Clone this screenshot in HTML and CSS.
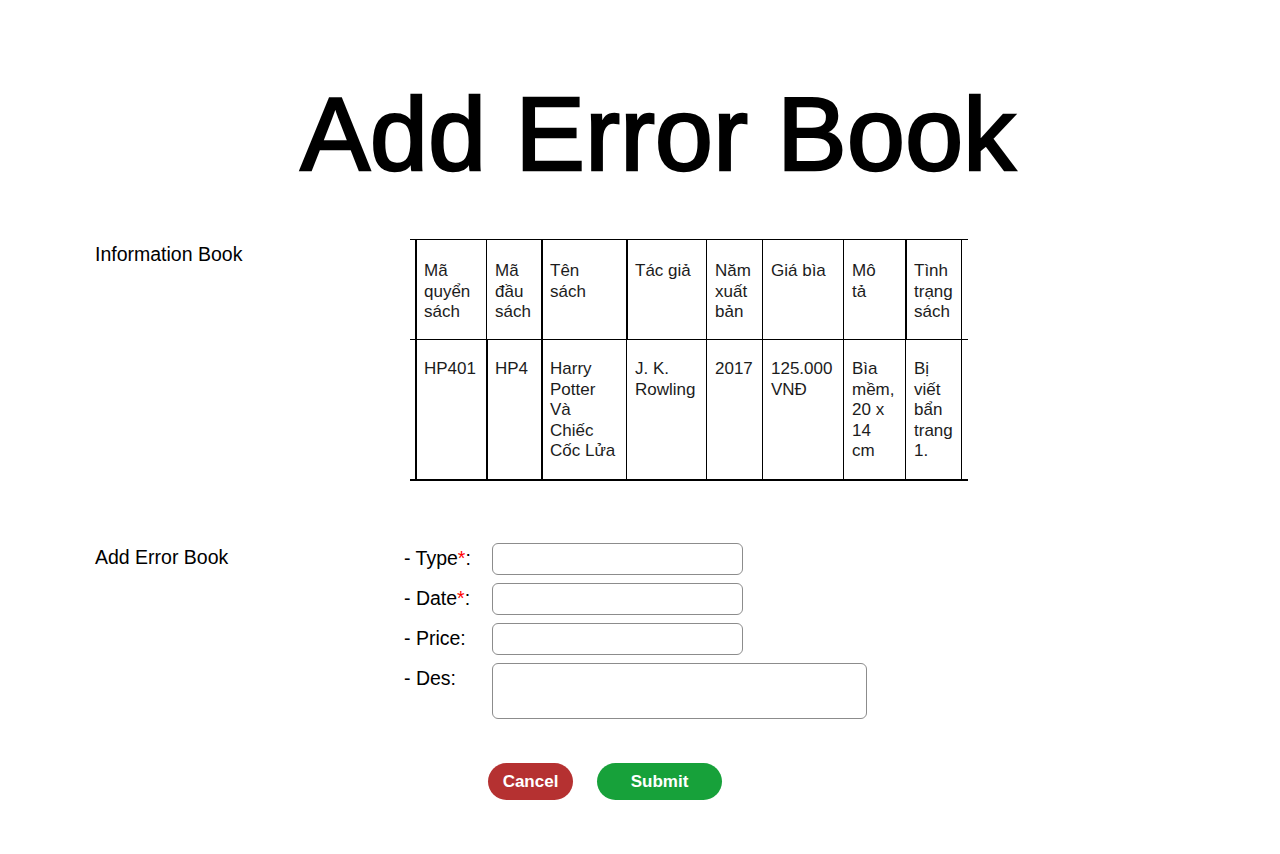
FILE: index.html
```html
<!DOCTYPE html>
<html lang="vi">
<head>
<meta charset="utf-8">
<title>Add Error Book</title>
<link rel="stylesheet" href="styles.css">
</head>
<body>
<main class="page">
  <h1 class="title">Add Error Book</h1>

  <section class="section info">
    <div class="section-label">Information Book</div>
    <div class="book-table">
      <div class="trow thead">
        <div class="cell spacer"></div>
        <div class="cell b2">Mã<br>quyển<br>sách</div>
        <div class="cell b1">Mã<br>đầu<br>sách</div>
        <div class="cell b2">Tên<br>sách</div>
        <div class="cell b2">Tác giả</div>
        <div class="cell b1">Năm<br>xuất<br>bản</div>
        <div class="cell b1">Giá bìa</div>
        <div class="cell b1">Mô<br>tả</div>
        <div class="cell b2">Tình<br>trạng<br>sách</div>
        <div class="cell b1 spacer"></div>
      </div>
      <div class="trow tbody">
        <div class="cell spacer"></div>
        <div class="cell b2">HP401</div>
        <div class="cell b2">HP4</div>
        <div class="cell b2">Harry<br>Potter<br>Và<br>Chiếc<br>Cốc Lửa</div>
        <div class="cell b1">J. K.<br>Rowling</div>
        <div class="cell b1">2017</div>
        <div class="cell b1">125.000<br>VNĐ</div>
        <div class="cell b1">Bìa<br>mềm,<br>20 x<br>14<br>cm</div>
        <div class="cell b1">Bị<br>viết<br>bẩn<br>trang<br>1.</div>
        <div class="cell b1 spacer"></div>
      </div>
    </div>
  </section>

  <section class="section add">
    <div class="section-label">Add Error Book</div>
    <div class="form-area">
      <form class="form">
        <label class="f-label" for="type">- Type<span class="req">*</span>:</label>
        <input class="f-input" id="type" type="text">
        <label class="f-label" for="date">- Date<span class="req">*</span>:</label>
        <input class="f-input" id="date" type="text">
        <label class="f-label" for="price">- Price:</label>
        <input class="f-input" id="price" type="text">
        <label class="f-label" for="des">- Des:</label>
        <textarea class="f-area" id="des"></textarea>
      </form>
      <div class="actions">
        <button class="btn btn-cancel" type="button">Cancel</button>
        <button class="btn btn-submit" type="button">Submit</button>
      </div>
    </div>
  </section>
</main>
</body>
</html>
```

FILE: styles.css
```css
* { box-sizing: border-box; }

html, body {
  margin: 0;
  padding: 0;
  background: #ffffff;
}

body {
  font-family: "Liberation Sans", Arial, sans-serif;
  color: #000;
}

.page {
  width: 1280px;
  padding-top: 82px;
}

.title {
  margin: 0;
  padding-left: 36px;
  text-align: center;
  font-size: 104px;
  line-height: 104px;
  font-weight: 400;
  letter-spacing: 0.3px;
  -webkit-text-stroke: 2.6px #000;
}

.section {
  display: grid;
  grid-template-columns: 309px 1fr;
  padding-left: 95px;
}

.section-label {
  font-size: 19.5px;
  line-height: 24px;
}

.info {
  margin-top: 53px;
}

.info .section-label {
  margin-top: 3px;
}

/* table */
.book-table {
  margin-left: 6px;
  width: 558px;
  border-top: 1px solid #000;
  border-bottom: 2px solid #000;
  font-size: 17px;
  line-height: 20.5px;
  color: #1c1c1c;
}

.trow {
  display: grid;
  grid-template-columns: 5px 71px 55px 85px 80px 56px 81px 62px 56px 7px;
}

.thead {
  height: 100px;
  border-bottom: 1px solid #000;
}

.tbody {
  height: 139px;
}

.cell {
  padding-left: 8px;
}

.thead .cell { padding-top: 21px; }
.tbody .cell { padding-top: 19px; }

.cell.b1 { border-left: 1px solid #000; padding-left: 8px; }
.cell.b2 { border-left: 2px solid #000; padding-left: 7px; }
.cell.spacer { padding: 0; }

/* form */
.add {
  margin-top: 62px;
}

.add .section-label {
  line-height: 32px;
  margin-top: -2px;
}

.form-area {
  display: flex;
  flex-direction: column;
}

.form {
  display: grid;
  grid-template-columns: 88px auto;
  row-gap: 8px;
  justify-content: start;
  align-items: start;
}

.f-label {
  font-size: 19.5px;
  line-height: 32px;
  margin-top: -1px;
}

.req {
  color: #ff0000;
}

.f-input,
.f-area {
  display: block;
  margin: 0;
  border: 1px solid #8c8c8c;
  border-radius: 6px;
  background: #fff;
  font: inherit;
  outline: none;
}

.f-input {
  width: 251px;
  height: 32px;
}

.f-area {
  width: 375px;
  height: 56px;
  resize: none;
}

.actions {
  display: flex;
  gap: 24px;
  margin-top: 44px;
  margin-left: 84px;
}

.btn {
  height: 37px;
  border: 0;
  border-radius: 19px;
  color: #fff;
  font-family: "Liberation Sans", Arial, sans-serif;
  font-size: 17px;
  font-weight: 700;
  padding: 0;
  cursor: pointer;
}

.btn-cancel {
  width: 85px;
  background: #b53131;
}

.btn-submit {
  width: 125px;
  background: #17a13a;
}
```
